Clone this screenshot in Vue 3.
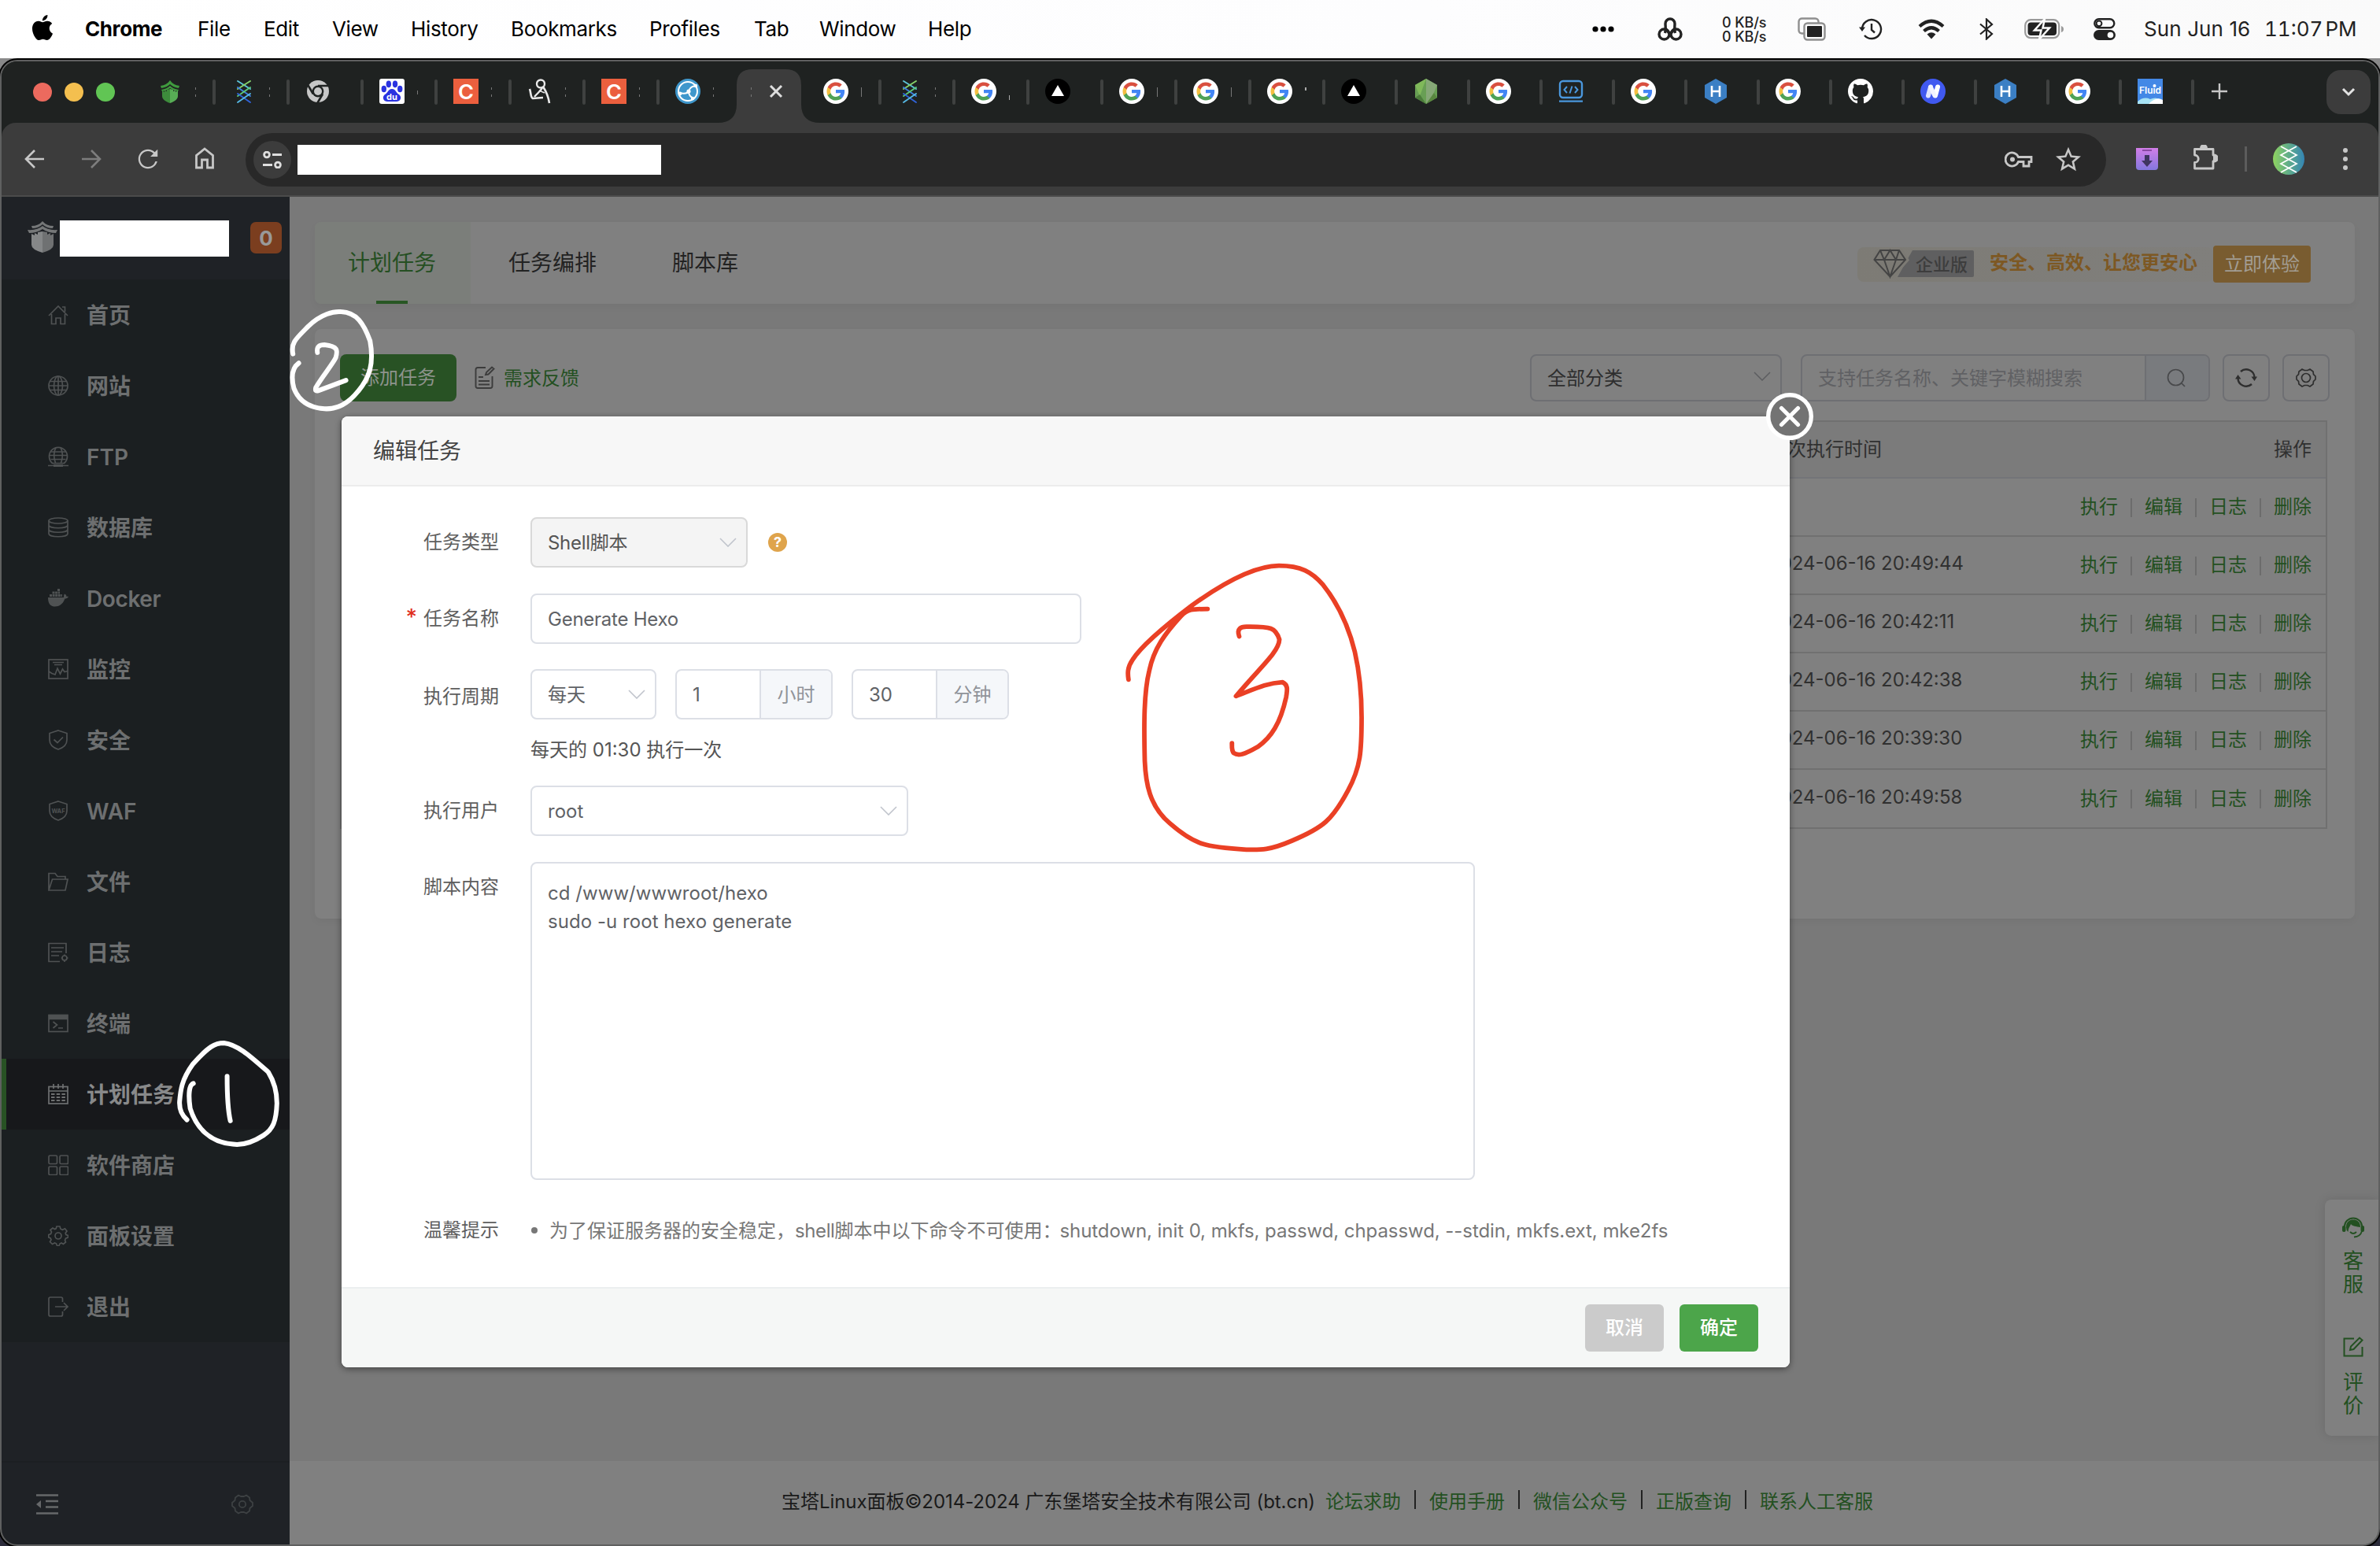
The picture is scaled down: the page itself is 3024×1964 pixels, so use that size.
<script setup>
const menuItems = [
  { label: 'Chrome', width: 143, bold: true },
  { label: 'File', width: 84 },
  { label: 'Edit', width: 87 },
  { label: 'View', width: 100 },
  { label: 'History', width: 127 },
  { label: 'Bookmarks', width: 176 },
  { label: 'Profiles', width: 133 },
  { label: 'Tab', width: 83 },
  { label: 'Window', width: 138 },
  { label: 'Help', width: 80 },
]

const fav = {
  bt: '<path d="M4 9Q12 8 16 2Q20 8 28 9L27 12Q20 11 16 7Q12 11 5 12Z" fill="#3f9a3e"/><path d="M5 14Q12 13 16 9Q20 13 27 14L26 16Q20 15 16 12Q12 15 6 16Z" fill="#3f9a3e"/><path d="M6 15l3 2v-2l3 1v-2l4-1v18C10 29 6 26 6 22Z" fill="#3d8c3c"/><path d="M26 15l-3 2v-2l-3 1v-2l-4-1v18C22 29 26 26 26 22Z" fill="#57ad55"/>',
  dna: '<g fill="none" stroke-width="2" stroke-linecap="round"><path stroke="#5cc4d8" d="M8 3L24 13"/><path stroke="#86d36a" d="M24 3L8 13"/><path stroke="#3d7fe0" d="M8 11L24 22"/><path stroke="#5cc97a" d="M24 11L8 22"/><path stroke="#2f63d8" d="M8 19L24 30"/><path stroke="#55b7e2" d="M24 19L8 30"/></g>',
  chrome: '<circle cx="16" cy="16" r="14" fill="#c7c7c7"/><g stroke="#1f2221" stroke-width="2.6" fill="none"><path d="M16 9H29M10 19.5L3.5 8.5M22 19.5L15.5 30.5"/></g><circle cx="16" cy="16" r="7.4" fill="#1f2221"/><circle cx="16" cy="16" r="5" fill="#c7c7c7"/>',
  baidu: '<rect width="32" height="32" rx="3" fill="#fff"/><g fill="#2a32e0"><ellipse cx="5.8" cy="13" rx="3.2" ry="4.2"/><ellipse cx="11.8" cy="6.8" rx="3.2" ry="4.4"/><ellipse cx="20" cy="6.8" rx="3.2" ry="4.4"/><ellipse cx="26.2" cy="13" rx="3.2" ry="4.2"/><path d="M16 13C21 13 21 18 25 20C29 23 27 29 22 29H10C5 29 3 23 7 20C11 18 11 13 16 13Z"/></g><text x="16" y="27" font-size="11" font-weight="700" text-anchor="middle" fill="#fff" font-family="Inter, sans-serif">du</text>',
  csdn: '<rect width="32" height="32" fill="#eb5f3e"/><text x="6" y="25.500" font-size="26" font-weight="600" fill="#fff" font-family="Inter, sans-serif" textLength="20" lengthAdjust="spacingAndGlyphs">C</text>',
  linux: '<g fill="none" stroke="#e9e9e9"><circle cx="17" cy="6.5" r="5" stroke-width="2.4"/><path d="M3 13C5 19 4 24 7 25L20 24" stroke-width="2.6"/><path d="M20 10C17 16 13 18 9 23" stroke-width="2.4"/><path d="M20 10C25 18 27 24 28 31" stroke-width="2.6"/><path d="M15 15L22 18" stroke-width="1.6"/></g>',
  orb: '<circle cx="16" cy="16" r="16" fill="#3f97cc"/><g fill="none" stroke="#fff" stroke-width="2"><circle cx="16" cy="16" r="12"/><path d="M5 18Q15 20 17 16Q19 9 27 9M17 16Q17 22 23 25"/></g><circle cx="17" cy="16" r="2.6" fill="#fff"/><circle cx="26" cy="9" r="2.2" fill="#fff"/><circle cx="6" cy="19" r="2.4" fill="#fff"/><circle cx="22" cy="25" r="2.2" fill="#fff"/>',
  google: '<circle cx="16" cy="16" r="16" fill="#fff"/><g transform="translate(3.4 3.4) scale(1.05)"><path fill="#4285F4" d="M22.56 12.25c0-.78-.07-1.53-.2-2.25H12v4.26h5.92c-.26 1.37-1.04 2.53-2.21 3.31v2.77h3.57c2.08-1.92 3.28-4.74 3.28-8.09z"/><path fill="#4fa256" d="M12 23c2.97 0 5.46-.98 7.28-2.66l-3.57-2.77c-.98.66-2.23 1.06-3.71 1.06-2.86 0-5.29-1.93-6.16-4.53H2.18v2.84C3.99 20.53 7.7 23 12 23z"/><path fill="#f4bf42" d="M5.84 14.09c-.22-.66-.35-1.36-.35-2.09s.13-1.43.35-2.09V7.07H2.18C1.43 8.55 1 10.22 1 12s.43 3.45 1.18 4.93l2.85-2.22.81-.62z"/><path fill="#d95040" d="M12 5.38c1.62 0 3.06.56 4.21 1.64l3.15-3.15C17.45 2.09 14.97 1 12 1 7.7 1 3.99 3.47 2.18 7.07l3.66 2.84c.87-2.6 3.3-4.53 6.16-4.53z"/></g>',
  vercel: '<circle cx="16" cy="16" r="16" fill="#000"/><path d="M16 8L24 22H8Z" fill="#fff"/>',
  node: '<path d="M16 0L30 8V24L16 32L2 24V8Z" fill="#689f54"/><path d="M16 0L30 8L22 27L16 32Z" fill="#86a877"/><path d="M2 8L16 0L8 22Z" fill="#80b95a"/><path d="M2 24L8 20L16 32Z" fill="#4c7c3b"/><path d="M30 24L26 18L16 32Z" fill="#58863f"/>',
  code: '<g fill="none" stroke="#4a97dd" stroke-width="2.4"><rect x="2" y="3" width="28" height="21" rx="4"/><path d="M1 28.6H31"/><path d="M11 10L7.500 14L11 18M21 10L24.500 14L21 18M17.500 9.500L14.500 18.500" stroke-width="2"/></g>',
  hexo: '<path d="M16 0L30 8V24L16 32L2 24V8Z" fill="#3b7fc4"/><path d="M11 9V23M21 9V23M11 16H21" stroke="#fff" stroke-width="2.6" fill="none"/>',
  github: '<path transform="scale(2)" fill="#fff" d="M8 0C3.58 0 0 3.58 0 8c0 3.54 2.29 6.53 5.47 7.59.4.07.55-.17.55-.38 0-.19-.01-.82-.01-1.49-2.01.37-2.53-.49-2.69-.94-.09-.23-.48-.94-.82-1.13-.28-.15-.68-.52-.01-.53.63-.01 1.08.58 1.23.82.72 1.21 1.87.87 2.33.66.07-.52.28-.87.51-1.07-1.78-.2-3.64-.89-3.64-3.95 0-.87.31-1.59.82-2.15-.08-.2-.36-1.02.08-2.12 0 0 .67-.21 2.2.82.64-.18 1.32-.27 2-.27s1.36.09 2 .27c1.53-1.04 2.2-.82 2.2-.82.44 1.1.16 1.92.08 2.12.51.56.82 1.27.82 2.15 0 3.07-1.87 3.75-3.65 3.95.29.25.54.73.54 1.48 0 1.07-.01 1.93-.01 2.2 0 .21.15.46.55.38A8.01 8.01 0 0016 8c0-4.42-3.58-8-8-8z"/>',
  nexmoe: '<circle cx="16" cy="16" r="16" fill="#4059f0"/><path d="M10 21.500L13 10.500" stroke="#dfe4ff" stroke-width="6" stroke-linecap="round"/><path d="M19 21.500L22 10.500" stroke="#fff" stroke-width="6" stroke-linecap="round"/><path d="M13 10.500L18 21" stroke="#f2f4ff" stroke-width="5.500" stroke-linecap="round"/>',
  fluid: '<rect width="32" height="32" fill="#4388e6"/><path d="M0 29Q8 22 16 26Q24 22 32 28V32H0Z" fill="#a7e3f5"/><path d="M14 32Q24 22 32 27V32Z" fill="#fff"/><text x="2" y="18.500" font-size="11.500" font-weight="600" fill="#fff" font-family="Inter, sans-serif" textLength="28" lengthAdjust="spacingAndGlyphs">Fluid</text><circle cx="21.500" cy="9" r="2" fill="#fff"/>',
}

const tab = (icon, frag = '', width = 94, sep = true) => ({ icon, frag, width, sep })
const leftTabs = [
  tab('bt', 'colon'), tab('dna', 'colon'), tab('chrome'), tab('baidu', 'dot'),
  tab('csdn', 'colon'), tab('linux', 'colon'), tab('csdn', 'colon'), tab('orb', 'colon', 94, false),
]
const rightTabs = [
  tab('google', 'bar'), tab('dna', 'colon'), tab('google', 'low'), tab('vercel'), tab('google', 'bar'),
  tab('google', 'bar'), tab('google', 'high'),
  ...['vercel', 'node', 'google', 'code', 'google', 'hexo', 'google', 'github', 'nexmoe', 'hexo', 'google', 'fluid']
    .map((n) => tab(n, '', 92)),
]

const side = [
  { label: '首页', icon: '<path d="M1 14L13 2L25 14M4.500 12V24.500H10V17H16V24.500H21.500V12M18 3H21.500V9"/>' },
  { label: '网站', icon: '<circle cx="13" cy="13" r="12"/><ellipse cx="13" cy="13" rx="5.500" ry="12"/><path d="M13 1V25M1 13H25M3 7.500H23M3 18.500H23"/>' },
  { label: 'FTP', icon: '<path d="M5.500 21.500A11.500 11.500 0 1 1 20.500 21.500Z"/><path d="M9.500 21C7 14 7 7 10 1.500M16.500 21C19 14 19 7 16 1.500M2 11.500H24M3.500 7H22.500M3.500 16.500H22.500M0 24.500H26"/><path d="M7 24.500H19" stroke-width="3"/>' },
  { label: '数据库', icon: '<ellipse cx="13" cy="4.500" rx="12" ry="3.500"/><path d="M1 4.500V21C1 26 25 26 25 21V4.500M1 10C1 15 25 15 25 10M1 15.500C1 20.500 25 20.500 25 15.500"/>' },
  { label: 'Docker', icon: '<path d="M0 12H20C20 10 20 9 21 7.500C23 8.500 23.500 9.500 23.500 11C24.500 10.500 25.500 10.500 26 11C25 13 23 13.500 21.500 13.500C19 20 15 23.500 9 23.500C3 23.500 0 20 0 12Z" fill="currentColor" stroke="none"/><path d="M2 9.500H18M5.500 6H15M12 2.500H15" stroke-width="3" stroke-dasharray="3 .6"/>' },
  { label: '监控', icon: '<rect x="1" y="1" width="24" height="24"/><path d="M6 4.500H20M8 7.500H18M1 16L5 18.500L9 20L12 12L15.500 19L18.500 13L21 16.500L25 15.500"/>' },
  { label: '安全', icon: '<path d="M13 1L24 4.500V13C24 19 19 23 13 25C7 23 2 19 2 13V4.500Z"/><path d="M7.500 12.500L12 16.500L19 9.500"/>' },
  { label: 'WAF', icon: '<path d="M13 1L24 4.500V13C24 19 19 23 13 25C7 23 2 19 2 13V4.500Z"/><text x="13" y="15.500" font-size="7.500" font-weight="700" text-anchor="middle" fill="currentColor" stroke="none" font-family="Inter, sans-serif">WAF</text>' },
  { label: '文件', icon: '<path d="M1 24V2.500H9L12 6.500H22V10M1 24L5.500 10H25L22 24Z"/>' },
  { label: '日志', icon: '<path d="M15 24.500H1V1.500H23V14M4 7H20M4 12H18M4 17H14"/><circle cx="21" cy="20" r="3" /><path d="M21 15.500V17M21 23V25M16.800 20H18M24 20H25.500"/>' },
  { label: '终端', icon: '<rect x="1" y="2.500" width="24" height="21"/><path d="M1 5.500H25" stroke-width="5.500"/><path d="M6.500 11L11.500 15L6.500 19M13 19H19"/>' },
  { label: '计划任务', active: true, icon: '<rect x="1" y="3.500" width="24" height="21.500"/><path d="M1 9H25M7 0V6M13 0V6M19 0V6"/><path d="M4 13H22M4 17H22M4 21H22" stroke-width="2" stroke-dasharray="4.500 2.200"/>' },
  { label: '软件商店', icon: '<rect x="1" y="1" width="10.500" height="10.500" rx="1.500"/><rect x="15" y="1" width="10.500" height="10.500" rx="1.500"/><rect x="1" y="15" width="10.500" height="10.500" rx="1.500"/><rect x="15" y="15" width="10.500" height="10.500" rx="1.500"/>' },
  { label: '面板设置', icon: '<circle cx="13" cy="13" r="4"/><path d="M11 1H15L16 4.200L18.500 5.200L21.500 3.800L24 7L22.200 9.500L22.800 11.500L25.500 12.500V15L22.500 16.200L21.500 18.500L22.500 21L19.500 23.500L17 22L15 23L14 25.500H11.500L10.500 22.800L8.500 22L5.500 23.500L2.500 20.500L4 18L3.200 16L.8 15V11.500L3.500 10.500L4.500 8L3 5.500L6 3L8.500 4.500L10.200 3.800Z"/>' },
  { label: '退出', icon: '<path d="M18.500 7V3Q18.500 1 16.500 1H3Q1 1 1 3V23Q1 25 3 25H16.500Q18.500 25 18.500 23V19M9 13H25M20 8L25 13L20 18"/>' },
]

const rows = ['', '2024-06-16 20:49:44', '2024-06-16 20:42:11', '2024-06-16 20:42:38', '2024-06-16 20:39:30', '2024-06-16 20:49:58']
const ops = ['执行', '编辑', '日志', '删除']
const links = ['论坛求助', '使用手册', '微信公众号', '正版查询', '联系人工客服']
</script>

<template>
  <div class="desktop">
    <header class="menubar">
      <svg class="apple" viewBox="0 0 24 24"><path d="M12.152 6.896c-.948 0-2.415-1.078-3.96-1.04-2.04.027-3.91 1.183-4.961 3.014-2.117 3.675-.546 9.103 1.519 12.09 1.013 1.454 2.208 3.09 3.792 3.039 1.52-.065 2.09-.987 3.935-.987 1.831 0 2.350.987 3.960.948 1.637-.026 2.676-1.480 3.676-2.948 1.156-1.688 1.636-3.325 1.662-3.415-.039-.013-3.182-1.221-3.220-4.857-.026-3.040 2.480-4.494 2.597-4.559-1.429-2.090-3.623-2.324-4.390-2.376-2-.156-3.675 1.090-4.610 1.090zM15.530 3.830c.843-1.012 1.400-2.427 1.245-3.830-1.207.052-2.662.805-3.532 1.818-.780.896-1.454 2.338-1.273 3.714 1.338.104 2.715-.688 3.559-1.701"/></svg>
      <span v-for="m in menuItems" :key="m.label" class="mi" :class="{ bold: m.bold }" :style="{ width: m.width + 'px' }">{{ m.label }}</span>
      <div class="status">
        <svg class="s-dots" width="28" height="8" viewBox="0 0 28 8"><circle cx="4" cy="4" r="3.600"/><circle cx="14" cy="4" r="3.600"/><circle cx="24" cy="4" r="3.600"/></svg>
        <svg class="s-knot" width="34" height="32" viewBox="0 0 34 32" fill="none" stroke="#222" stroke-width="3.400"><path d="M10.500 21C12 17 11 13 11 9A6 6 0 0 1 23 9C23 13 22 17 23.500 21"/><circle cx="9.500" cy="22.500" r="6.500"/><circle cx="24.500" cy="22.500" r="6.500"/><path d="M11 15L17 23L23 15"/></svg>
        <div class="net"><span>0 KB/s</span><span>0 KB/s</span></div>
        <svg class="s-stack" width="36" height="30" viewBox="0 0 36 30"><rect x="1.500" y="1.500" width="25" height="19" rx="4" fill="none" stroke="#8f8f8f" stroke-width="2.400"/><rect x="8.500" y="7.500" width="26" height="21" rx="4" fill="#fbfbfb" stroke="#8f8f8f" stroke-width="2.400"/><rect x="12" y="11" width="19" height="14" rx="1" fill="#222"/></svg>
        <svg class="s-clock" width="30" height="28" viewBox="0 0 30 28" fill="none" stroke="#222" stroke-width="2.400"><path d="M4 14A12 12 0 1 1 7 22"/><path d="M16 7V15L20 18.500"/><path d="M0 11.500H8L4 17Z" fill="#222" stroke="none"/></svg>
        <svg class="s-wifi" width="34" height="26" viewBox="0 0 34 26" fill="none" stroke="#222" stroke-width="4.200"><path d="M2 9.500Q17 -4 32 9.500"/><path d="M7.500 15.500Q17 7 26.500 15.500"/><path d="M11.500 19.500Q17 15 22.500 19.500L17 25.500Z" fill="#222" stroke="none"/></svg>
        <svg class="s-bt" width="18" height="28" viewBox="0 0 18 28" fill="none" stroke="#222" stroke-width="2.200"><path d="M1 7.500L16 20L9 26.500V1.500L16 8L1 20.500"/></svg>
        <svg class="s-bat" width="50" height="26" viewBox="0 0 50 26"><rect x="1.200" y="1.200" width="43" height="23" rx="7" fill="none" stroke="#9a9a9a" stroke-width="2.200"/><path d="M47 9Q50 10 50 13T47 17Z" fill="#9a9a9a"/><rect x="4.500" y="4.500" width="36.500" height="16.500" rx="4" fill="#222"/><path d="M26 0L13 14.500H21.500L19 26L32 11.500H23.500Z" fill="#222" stroke="#fbfbfb" stroke-width="2.500"/></svg>
        <svg class="s-cc" width="28" height="28" viewBox="0 0 28 28"><rect x="1.300" y="1.300" width="25" height="11" rx="5.500" fill="none" stroke="#222" stroke-width="2.400"/><circle cx="7" cy="6.800" r="3.400" fill="none" stroke="#222" stroke-width="2"/><rect y="15" width="28" height="13" rx="6.500" fill="#222"/><circle cx="21.500" cy="21.500" r="3.800" fill="#fff"/></svg>
        <span class="date">Sun Jun 16</span><span class="time">11:07 PM</span>
      </div>
    </header>

    <div class="window">
      <div class="tabstrip">
        <div class="lights"><i class="r"></i><i class="y"></i><i class="g"></i></div>
        <div v-for="(t, i) in leftTabs" :key="'l' + i" class="tab" :style="{ width: t.width + 'px' }">
          <svg class="fav" viewBox="0 0 32 32" v-html="fav[t.icon]"></svg>
          <i class="frag" :class="t.frag"></i>
          <i v-if="t.sep" class="sep"></i>
        </div>
        <div class="tab active">
          <svg class="shape" width="130" height="68" viewBox="0 0 130 68"><path d="M0 68Q24 68 24 44V20Q24 0 44 0H86Q106 0 106 20V44Q106 68 130 68Z" fill="#3c3c3c"/></svg>
          <i class="frag colon"></i>
          <svg class="x" width="18" height="18" viewBox="0 0 18 18"><path d="M2 2L16 16M16 2L2 16" stroke="#dedede" stroke-width="3"/></svg>
        </div>
        <div v-for="(t, i) in rightTabs" :key="'r' + i" class="tab" :style="{ width: t.width + 'px' }">
          <svg class="fav" viewBox="0 0 32 32" v-html="fav[t.icon]"></svg>
          <i class="frag" :class="t.frag"></i>
          <i class="sep"></i>
        </div>
        <svg class="plus" width="22" height="22" viewBox="0 0 22 22"><path d="M11 1V21M1 11H21" stroke="#c7c7c7" stroke-width="2.400"/></svg>
        <div class="drop"><svg width="18" height="12" viewBox="0 0 18 12"><path d="M2 2L9 9L16 2" fill="none" stroke="#e3e3e3" stroke-width="3"/></svg></div>
      </div>

      <div class="toolbar">
        <svg class="ic back" viewBox="0 0 26 26" fill="none" stroke="#c7c7c7" stroke-width="2.600"><path d="M25 13H2M13 2L2 13L13 24"/></svg>
        <svg class="ic fwd" viewBox="0 0 26 26" fill="none" stroke="#7d7d7d" stroke-width="2.600"><path d="M1 13H24M13 2L24 13L13 24"/></svg>
        <svg class="ic reload" viewBox="3.500 3.500 17 17" fill="#c7c7c7"><path d="M17.650 6.350A7.958 7.958 0 0 0 12 4c-4.420 0-7.990 3.580-7.990 8s3.570 8 7.990 8c3.730 0 6.840-2.550 7.730-6h-1.600A6.450 6.450 0 0 1 12 18.500c-3.590 0-6.500-2.910-6.500-6.500s2.910-6.500 6.500-6.500c1.800 0 3.400.74 4.580 1.920L14 10h6V4l-2.350 2.350z"/></svg>
        <svg class="ic home" viewBox="0 0 26 28" fill="none" stroke="#c7c7c7" stroke-width="2.800"><path d="M2.500 26V10.500L13 2L23.500 10.500V26H16.500V16H9.500V26Z"/></svg>
        <div class="omni">
          <div class="chip"><svg width="24" height="22" viewBox="0 0 24 22" fill="none" stroke="#dedede" stroke-width="2.800"><circle cx="5" cy="4.500" r="3.400"/><path d="M12 4.500H24M0 17.500H12"/><circle cx="19" cy="17.500" r="3.400"/></svg></div>
          <div class="url"></div>
          <svg class="key" width="36" height="22" viewBox="0 0 36 22" fill="none" stroke="#c7c7c7" stroke-width="2.800"><path d="M17.500 7.500A8.500 8.500 0 1 0 17.500 13.500H24V19H31V13.500H34V7.500Z"/><circle cx="10" cy="10.500" r="3" fill="#c7c7c7" stroke="none"/></svg>
          <svg class="star" width="32" height="32" viewBox="2 1.500 20 20" fill="#c7c7c7"><path d="M22 9.240l-7.190-.620L12 2 9.190 8.630 2 9.240l5.460 4.730L5.820 21 12 17.270 18.180 21l-1.630-7.030L22 9.240zM12 15.400l-3.760 2.270 1-4.280-3.320-2.880 4.380-.380L12 6.100l1.710 4.040 4.380.380-3.320 2.880 1 4.280L12 15.400z"/></svg>
        </div>
        <svg class="ext" width="28" height="28" viewBox="0 0 28 28"><defs><linearGradient id="pg" x1="0" y1="0" x2="0" y2="1"><stop offset="0" stop-color="#d27ee8"/><stop offset="1" stop-color="#8377dd"/></linearGradient></defs><path d="M0 0H28V24Q28 28 24 28H4Q0 28 0 24Z" fill="url(#pg)"/><path d="M8 3H20" stroke="#8a4aa5" stroke-width="2"/><path d="M11 9H17V16H21L14 24L7 16H11Z" fill="#3f3560"/></svg>
        <svg class="puz" width="32" height="32" viewBox="0 0 32 32" fill="none" stroke="#c7c7c7" stroke-width="2.800"><path d="M2.500 5.500H26V13H27.500A3.500 3.500 0 0 1 27.500 21H26V30H2.500V22.500A4.500 4.500 0 0 0 2.500 13Z" stroke-linejoin="round"/><path d="M10.500 5V4A3.500 3.500 0 0 1 17.500 4V5Z" fill="#c7c7c7"/><path d="M26 13H28A4 4 0 0 1 28 21H26Z" fill="#c7c7c7" stroke="none"/></svg>
        <i class="tsep"></i>
        <svg class="avatar" width="40" height="40" viewBox="0 0 40 40"><defs><linearGradient id="ag"><stop offset="0" stop-color="#8fd45f"/><stop offset="1" stop-color="#3385b5"/></linearGradient></defs><circle cx="20" cy="20" r="20" fill="url(#ag)"/><path d="M10 4L30 15L10 26L30 37M30 4L10 15L30 26L10 37" fill="none" stroke="#fff" stroke-width="1.800"/></svg>
        <svg class="kebab" width="6" height="30" viewBox="0 0 6 30" fill="#c7c7c7"><circle cx="3" cy="4" r="3"/><circle cx="3" cy="15" r="3"/><circle cx="3" cy="26" r="3"/></svg>
      </div>

      <div class="page">
        <aside class="sidebar">
          <div class="brand">
            <svg width="38" height="42" viewBox="0 0 38 42"><g fill="#757778"><path d="M5 7Q14 7 19 1Q24 7 33 7L32 10Q24 10 19 5Q14 10 6 10Z"/><path d="M0 12Q12 13 19 7Q26 13 38 12L36 16Q26 16 19 11Q12 16 2 16Z"/><path d="M5 17L9 19V16L13 18V15L19 14V41Q5 37 5 31Z" fill="#858788"/><path d="M33 17L29 19V16L25 18V15L19 14V41Q33 37 33 31Z" fill="#6f7172"/></g></svg>
            <div class="redact"></div>
            <span class="badge">0</span>
          </div>
          <nav class="nav">
            <div v-for="s in side" :key="s.label" class="item" :class="{ on: s.active }">
              <svg viewBox="0 0 26 26" fill="none" stroke="currentColor" stroke-width="1.700" v-html="s.icon"></svg>
              <span>{{ s.label }}</span>
            </div>
          </nav>
          <div class="sidefoot">
            <svg width="28" height="26" viewBox="0 0 28 26" stroke="#66686a" stroke-width="2.400"><path d="M0 1.500H28M12 9H28M12 16.500H28M0 24.500H28"/><path d="M0 13L6 8V18Z" fill="#66686a" stroke="none"/></svg>
            <svg width="28" height="26" viewBox="0 0 28 26" fill="none" stroke="#3d4143" stroke-width="1.800"><path d="M9 1.500L12 3H16L19 1.500L23 4.500L23.500 8L27 11V15L23.500 18L23 21.500L19 24.500L16 23H12L9 24.500L5 21.500L4.500 18L1 15V11L4.500 8L5 4.500Z" stroke-linejoin="round"/><circle cx="14" cy="13" r="4.200"/></svg>
          </div>
        </aside>

        <main class="main">
          <section class="card tabs">
            <div class="ptab on">计划任务</div>
            <div class="ptab">任务编排</div>
            <div class="ptab">脚本库</div>
            <div class="promo">
              <div class="ent">
                <svg width="128" height="38" viewBox="0 0 128 38"><path d="M50 2H126Q128 2 128 4V34Q128 36 126 36H31Z" fill="#5f5f60"/><path d="M9 1.500H33L41 14L21.500 36L1 14Z" fill="#7c7a74" stroke="#7c7a74" stroke-width="8" /><path d="M9 2H33L41 14L21.500 35.500L1.500 14Z M1.500 14H41 M9 2L14 14L21.500 35.500L29 14L33 2 M14 14L21.500 2L29 14" fill="none" stroke="#444" stroke-width="2"/></svg>
                <span>企业版</span>
              </div>
              <span class="slogan">安全、高效、让您更安心</span>
            </div>
            <span class="try">立即体验</span>
          </section>

          <section class="card content">
            <div class="bar">
              <span class="add">添加任务</span>
              <svg class="fb" width="26" height="30" viewBox="0 0 26 30" fill="none" stroke="#3c3c3c" stroke-width="1.900"><path d="M14 2H4Q1.500 2 1.500 4.500V25.500Q1.500 28 4 28H20Q22.500 28 22.500 25.500V13M5 14H11M5 19H19M5 23.500H19M14 11L15 8L22 1.500L24.500 3.500L17.500 10.500Z"/></svg>
              <span class="fbt">需求反馈</span>
              <div class="sel"><span>全部分类</span><svg width="22" height="12" viewBox="0 0 22 12"><path d="M1 1L11 11L21 1" fill="none" stroke="#5c5d60" stroke-width="1.500"/></svg></div>
              <div class="search"><span>支持任务名称、关键字模糊搜索</span><div><svg width="24" height="24" viewBox="0 0 24 24" fill="none" stroke="#48494b" stroke-width="1.700"><circle cx="11.500" cy="11.500" r="10"/><path d="M18.500 18.500L23 23"/></svg></div></div>
              <div class="sq"><svg width="28" height="26" viewBox="0 0 28 26" fill="none" stroke="#2e2e2e" stroke-width="2.400"><path d="M7 5A10.500 10.500 0 0 1 24.500 13M21 21A10.500 10.500 0 0 1 3.500 13"/><path d="M20.500 11.500H28L24.500 17ZM0 14.500H7.500L3.500 9Z" fill="#2e2e2e" stroke="none"/></svg></div>
              <div class="sq"><svg width="26" height="26" viewBox="0 0 26 26" fill="none" stroke="#2e2e2e" stroke-width="1.700"><path d="M8 2L11 3.500H15L18 2L22 5L22.500 8.500L25 11V15L22.500 17.500L22 21L18 24L15 22.500H11L8 24L4 21L3.500 17.500L1 15V11L3.500 8.500L4 5Z"/><circle cx="13" cy="13" r="5.500"/></svg></div>
            </div>
            <div class="table">
              <div class="tr th"><span class="when">上次执行时间</span><span class="thop">操作</span></div>
              <div v-for="(r, i) in rows" :key="i" class="tr">
                <span class="when date-cell">{{ r }}</span>
                <div class="ops"><template v-for="(o, j) in ops" :key="o"><i v-if="j"></i><span>{{ o }}</span></template></div>
              </div>
            </div>
          </section>

          <footer class="foot">
            <span class="copy">宝塔Linux面板©2014-2024 广东堡塔安全技术有限公司 (bt.cn)</span>
            <template v-for="(l, i) in links" :key="l"><i v-if="i"></i><a>{{ l }}</a></template>
          </footer>
        </main>

        <div class="widget">
          <svg width="28" height="28" viewBox="0 0 28 28"><path d="M3 12A11 10.500 0 0 1 25 12" fill="none" stroke="#235021" stroke-width="2"/><path d="M5 13C5 6 9 3.500 14 3.500S23 6 23 13C18 12 13 12 11 9C10 12 8 13 7.500 19Q5 17 5 13Z" fill="#235021"/><rect x="0" y="11" width="4.500" height="8" rx="2" fill="#235021"/><rect x="23.500" y="11" width="4.500" height="8" rx="2" fill="#235021"/><path d="M25 18Q23 25 15 25.500M10 19Q14 23 18 19" fill="none" stroke="#235021" stroke-width="1.800"/></svg>
          <p>客<br>服</p>
          <svg class="w2" width="26" height="26" viewBox="0 0 26 26" fill="none" stroke="#235021" stroke-width="2"><path d="M14 2.500H1.500V24.500H24.500V13M9 17L10 12.500L21 1.500L24.500 4.500L13.500 16Z"/></svg>
          <p>评<br>价</p>
        </div>

        <div class="modal">
          <div class="mhead">编辑任务</div>
          <div class="mbody">
            <div class="row"><label>任务类型</label>
              <div class="ctl select dis" style="width: 276px"><span>Shell脚本</span><svg width="22" height="12" viewBox="0 0 22 12"><path d="M1 1L11 11L21 1"/></svg></div>
              <span class="q">?</span></div>
            <div class="row r2"><label><b>*</b>任务名称</label><div class="ctl" style="width: 700px"><span class="lat">Generate Hexo</span></div></div>
            <div class="row r3"><label class="down">执行周期</label>
              <div class="ctl select" style="width: 160px"><span>每天</span><svg width="22" height="12" viewBox="0 0 22 12"><path d="M1 1L11 11L21 1"/></svg></div>
              <div class="ctl unit"><span>1</span><em>小时</em></div>
              <div class="ctl unit"><span>30</span><em>分钟</em></div></div>
            <div class="hint">每天的 01:30 执行一次</div>
            <div class="row r4"><label>执行用户</label><div class="ctl select" style="width: 480px"><span class="root">root</span><svg width="22" height="12" viewBox="0 0 22 12"><path d="M1 1L11 11L21 1"/></svg></div></div>
            <div class="row r5"><label>脚本内容</label><div class="ctl area"><span class="l1">cd /www/wwwroot/hexo</span><span class="l2">sudo -u root hexo generate</span></div></div>
            <div class="row tips"><label>温馨提示</label><div class="tip"><i></i><span>为了保证服务器的安全稳定，<s>shell</s>脚本中以下命令不可使用：<u>shutdown, init 0, mkfs, passwd, chpasswd, --stdin, mkfs.ext, mke2fs</u></span></div></div>
          </div>
          <div class="mfoot"><span class="btn gray">取消</span><span class="btn green">确定</span></div>
          <svg class="close" width="60" height="60" viewBox="0 0 60 60"><circle cx="30" cy="30" r="27.300" fill="#737373" stroke="#fff" stroke-width="5.400"/><path d="M19.500 19.500L40.500 40.500M40.500 19.500L19.500 40.500" stroke="#fff" stroke-width="5.200" stroke-linecap="round"/></svg>
        </div>
      </div>
    </div>

    <svg class="ink" width="3024" height="1964" viewBox="0 0 3024 1964" fill="none" stroke-linecap="round" stroke-linejoin="round">
      <g transform="translate(0 230) scale(.40816 .44643)" stroke="#fff" stroke-width="6">
        <path vector-effect="non-scaling-stroke" d="M912 492C905 460 920 450 960 413C1000 378 1040 370 1062 372C1110 374 1132 405 1152 455C1165 520 1150 560 1115 598C1080 638 1045 650 1010 648C960 645 930 625 915 590C905 555 912 530 930 518"/>
        <path vector-effect="non-scaling-stroke" d="M988 488C985 470 995 466 1010 466C1052 470 1052 482 1045 503C1035 522 1000 560 983 588C980 598 985 598 992 596L1077 567"/>
      </g>
      <g transform="translate(0 930) scale(.40816 .65944)" stroke="#fff" stroke-width="6">
        <path vector-effect="non-scaling-stroke" d="M582 747C565 738 558 725 559 712C562 690 565 670 600 640C650 605 670 599 697 599C740 602 780 625 835 655C860 680 862 700 862 715C860 750 850 765 820 777C780 793 750 796 725 794C650 790 610 760 592 725C586 700 588 680 602 677"/>
        <path vector-effect="non-scaling-stroke" d="M707 663C707 700 710 730 717 749"/>
      </g>
      <g transform="translate(1400 500) scale(.57398 .39541)" stroke="#ea4025" stroke-width="5.800">
        <path vector-effect="non-scaling-stroke" d="M59 919C57 900 56 880 68 855C90 805 150 735 200 680C250 628 330 553 392 553C440 553 465 572 490 615C520 670 545 740 560 830C571 900 575 960 575 1040C575 1150 573 1200 545 1275C510 1370 490 1395 420 1437C370 1468 350 1466 320 1465C230 1458 205 1450 150 1380C105 1325 97 1250 95 1180C93 1060 93 960 105 890C115 820 140 770 175 715C190 692 200 692 234 692"/>
        <path vector-effect="non-scaling-stroke" d="M304 780C298 755 308 749 320 749C375 748 385 752 393 790C392 830 350 880 297 972C340 948 365 930 400 927C412 935 411 950 408 975C395 1060 375 1105 345 1135C315 1160 302 1165 292 1155C287 1148 288 1130 288 1123"/>
      </g>
    </svg>
  </div>
</template>

<style>
body { margin: 0; background: #000; }
</style>

<style scoped>
* { box-sizing: border-box; }
i, em { font-style: normal; }
.desktop { position: relative; width: 3024px; height: 1964px; overflow: hidden; background: linear-gradient(#8d8d8d, #2b2b3a); font-family: Inter, "Noto Sans CJK SC", sans-serif; font-size: 24px; white-space: nowrap; }
.desktop svg { flex: none; display: block; }

.menubar { height: 74px; background: linear-gradient(90deg, #fff, #fdfdfe 60%, #fafafa); display: flex; padding-left: 38px; color: #000; font-size: 26px; letter-spacing: -.35px; line-height: 74px; }
.apple { width: 32px; height: 32px; margin: 19px 38px 0 0; }
.mi { flex: none; display: block; }
.mi.bold { font-weight: 700; letter-spacing: -.4px; width: 142px; }
.status { flex: 1; display: flex; align-items: center; justify-content: flex-end; color: #222; padding-right: 34px; }
.s-dots { margin-right: 54px; }
.s-knot { margin-right: 49px; }
.net { width: 58px; display: flex; flex-direction: column; font-size: 18px; line-height: 18px; letter-spacing: -.1px; font-weight: 500; margin-right: 38px; padding-top: 2px; }
.s-stack { margin-right: 42px; }
.s-clock { margin-right: 45px; }
.s-wifi { margin-right: 44px; }
.s-bt { margin-right: 39px; }
.s-bat { margin-right: 38px; }
.s-cc { margin-right: 36px; }
.date { width: 153px; letter-spacing: .1px; }
.time { width: 113px; letter-spacing: 0; word-spacing: -4px; font-variant-numeric: tabular-nums; }

.window { margin-top: 2px; height: 1888px; border: 2px solid #5f6060; border-radius: 22px; overflow: hidden; background: #1f2221; box-shadow: 0 0 0 2px #000; display: flex; flex-direction: column; }
.tabstrip { height: 78px; display: flex; align-items: center; background: #1f2221; flex: none; }
.lights { width: 176px; padding-left: 39.500px; display: flex; gap: 16px; flex: none; }
.lights i { width: 24px; height: 24px; border-radius: 50%; }
.lights .r { background: #ec6a5e; }
.lights .y { background: #f4bf4f; }
.lights .g { background: #61c554; }
.tab { height: 78px; display: flex; align-items: center; padding-left: 22px; position: relative; flex: none; }
.fav { width: 32px; height: 32px; margin-top: -2px; }
.frag { width: 2px; height: 24px; margin-left: 16px; flex: none; }
.frag.colon { background: linear-gradient(#777 0 3px, transparent 3px 9px, #777 9px 12px, transparent 12px); height: 12px; width: 1px; }
.frag.dot { background: #777; width: 1px; height: 5px; }
.frag.bar { background: #777; width: 1px; height: 12px; }
.frag.low { background: #aaa; width: 1px; height: 6px; margin-top: 14px; }
.frag.high { background: #aaa; width: 2px; height: 4px; margin-top: -8px; }
.sep { width: 4px; height: 32px; border-radius: 2px; background: #3f4140; margin: 0 -2px 0 auto; }
.tab.active { width: 94px; }
.shape { position: absolute; left: -18px; top: 10px; }
.tab.active .frag { position: relative; margin-left: 2px; }
.tab.active .x { position: relative; margin-left: 22px; margin-top: -2px; }
.plus { margin-left: 23px; margin-top: -2px; }
.drop { margin-left: auto; margin-right: 10px; width: 56px; height: 56px; border-radius: 18px; background: #3c3c3c; display: flex; align-items: center; justify-content: center; margin-top: -1px; }

.toolbar { height: 94px; background: #3c3c3c; border-bottom: 2px solid #4b4b4b; border-radius: 18px 18px 0 0; display: flex; align-items: center; flex: none; padding-left: 29px; }
.ic { width: 26px; height: 26px; margin-right: 46px; }
.ic.home { height: 28px; margin-top: -2px; margin-right: 39px; }
.omni { width: 2364px; height: 68px; border-radius: 34px; background: #282828; display: flex; align-items: center; padding-left: 10px; flex: none; margin-top: 1px; }
.chip { width: 48px; height: 48px; border-radius: 50%; background: #3c3c3c; display: flex; align-items: center; justify-content: center; }
.url { width: 462px; height: 38px; background: #fff; margin-left: 8px; }
.key { margin-left: auto; margin-right: 29px; }
.star { margin-right: 32px; margin-top: -2px; }
.ext { margin-left: 38px; }
.puz { margin-left: 44px; margin-top: -4px; }
.tsep { width: 3px; height: 32px; background: #5c5c5c; margin-left: 34px; }
.avatar { margin-left: 33px; }
.kebab { margin-left: 49px; }

.page { flex: 1; display: flex; position: relative; background: #797979; }
.sidebar { width: 366px; background: #1f2226; display: flex; flex-direction: column; flex: none; }
.brand { height: 105px; display: flex; align-items: flex-start; padding: 30px 0 0 33px; }
.redact { width: 215px; height: 46px; background: #fff; margin-left: 3px; }
.badge { margin: 2px 0 0 27px; width: 40px; height: 40px; border-radius: 7px; background: #7b3e1f; color: #999; font-size: 26px; font-weight: 700; text-align: center; line-height: 41px; }
.nav { background: #1b1f21; }
.item { height: 90px; display: flex; align-items: center; padding-left: 59px; color: #4f5253; }
.item svg { width: 26px; height: 26px; margin-right: 23px; }
.item span { color: #6d6f70; font-size: 28px; font-weight: 600; line-height: 40px; padding-top: 1px; }
.item:nth-child(5) span { letter-spacing: -.4px; }
.item.on { background: #17181b; color: #6e7071; padding-left: 53px; border-left: 6px solid #285224; }
.item.on span { color: #88898a; }
.sidefoot { margin-top: auto; height: 106px; border-top: 2px solid #1c1f22; display: flex; justify-content: space-between; align-items: center; padding: 2px 46px 0 44px; }

.main { flex: 1; display: flex; flex-direction: column; min-width: 0; }
.card { background: #808080; border-radius: 8px; margin: 32px 30px 0 32px; box-shadow: 0 4px 10px rgba(0, 0, 0, .04); flex: none; }
.tabs { height: 104px; display: flex; align-items: center; font-size: 28px; color: #222; overflow: hidden; }
.ptab { padding: 0 48px; line-height: 105px; height: 104px; position: relative; }
.ptab.on { width: 198px; padding: 0 0 0 42px; color: #254f22; background: #7b7e7a; }
.ptab.on::after { content: ""; position: absolute; left: 78px; bottom: 0; width: 40px; height: 4px; background: #285724; }
.promo { margin-left: auto; width: 452px; height: 44px; border-radius: 8px; background: linear-gradient(90deg, #7d7b75, #807f7c); display: flex; align-items: center; padding-left: 20px; margin-top: 4px; }
.ent { position: relative; width: 128px; height: 38px; }
.ent svg { margin-top: -1px; }
.ent span { position: absolute; left: 54px; top: 2px; font-size: 22px; line-height: 34px; font-weight: 500; color: #3d3d3d; }
.slogan { margin-left: 20px; color: #7d5823; font-weight: 700; font-size: 24px; line-height: 40px; margin-top: -4px; }
.try { width: 124px; height: 47px; border-radius: 4px; background: #795c30; color: #a29d93; font-size: 24px; line-height: 47px; text-align: center; margin: 3px 56px 0 0; }

.content { height: 749px; display: flex; flex-direction: column; padding: 32px 32px 0; }
.bar { display: flex; align-items: center; height: 60px; }
.add { width: 148px; height: 60px; border-radius: 8px; background: #285224; color: #8d938c; text-align: center; line-height: 60px; }
.fb { margin-left: 23px; }
.fbt { color: #235021; margin-left: 11px; margin-top: -3px; }
.sel { margin-left: auto; width: 320px; height: 60px; border: 2px solid #6e6f73; border-radius: 8px; display: flex; align-items: center; justify-content: space-between; padding: 0 12px 0 20px; color: #2e2e2e; }
.sel span { margin-top: -3px; }
.sel svg { margin-top: -4px; }
.search { margin-left: 24px; width: 520px; height: 60px; border: 2px solid #6e6f73; border-radius: 8px; display: flex; align-items: center; color: #606164; overflow: hidden; }
.search span { width: 435px; padding-left: 20px; margin-top: -3px; }
.search div { flex: 1; height: 56px; border-left: 2px solid #6e6f73; background: #797b7e; display: flex; align-items: center; justify-content: center; padding-right: 3px; }
.sq { margin-left: 16px; width: 60px; height: 60px; border: 2px solid #6e6f73; border-radius: 8px; display: flex; align-items: center; justify-content: center; }
.table { margin: 24px 3px 0 0; height: 519px; border: 2px solid #707070; display: flex; flex-direction: column; }
.tr { height: 74px; border-bottom: 2px solid #707070; display: flex; align-items: center; justify-content: space-between; padding: 0 18px 5px 1813px; color: #303030; flex: none; }
.tr:last-child { border-bottom: 0; height: 73px; }
.th { height: 72px; background: #7b7b7b; border-color: #737478; }
.date-cell { letter-spacing: 0; font-size: 24px; }
.ops { display: flex; align-items: center; color: #235021; }
.ops i { width: 2px; height: 24px; background: #6c6c6c; margin: 6px 16px 0; }

.foot { margin-top: auto; height: 106px; background: #808080; display: flex; align-items: center; padding: 0 0 8px 625px; color: #1a1a1a; }
.copy { width: 691px; letter-spacing: -.05px; }
.foot a { color: #235021; }
.foot i { width: 2px; height: 24px; background: #222; margin: 0 17px; }

.widget { position: absolute; left: 2952px; top: 1274px; width: 68px; height: 300px; border-radius: 8px 0 0 8px; background: #808080; box-shadow: 0 0 14px rgba(0, 0, 0, .12); display: flex; flex-direction: column; align-items: center; padding-top: 22px; padding-left: 4px; color: #235021; }
.widget p { margin: 13px 0 0; font-size: 26px; line-height: 30px; text-align: center; }
.widget .w2 { margin-top: 51px; }
.widget .w2 + p { margin-top: 17px; }

.modal { position: absolute; left: 432px; top: 279px; width: 1840px; height: 1208px; background: #fff; border-radius: 8px; box-shadow: 0 2px 8px rgba(0, 0, 0, .45); display: flex; flex-direction: column; color: #666; }
.mhead { height: 89px; background: #f7f7f7; border-bottom: 2px solid #ececec; border-radius: 8px 8px 0 0; padding-left: 40px; font-size: 28px; line-height: 89px; color: #444; }
.mbody { flex: 1; padding-top: 39px; }
.row { display: flex; align-items: flex-start; height: 64px; }
.row label { width: 200px; margin-right: 40px; text-align: right; line-height: 64px; flex: none; color: #5e5e5e; }
.row label.down { padding-top: 3px; }
.row b { color: #e0301e; font-weight: 500; margin-right: 8px; font-size: 28px; line-height: 1; }
.ctl { height: 64px; border: 2px solid #dcdfe6; border-radius: 8px; padding-left: 20px; line-height: 61px; flex: none; color: #606266; background: #fff; }
.select { display: flex; justify-content: space-between; align-items: center; padding-right: 12px; }
.select path { fill: none; stroke: #c0c4cc; stroke-width: 1.600; }
.dis { background: #f4f4f4; border-color: #d9d9d9; color: #555; }
.dis span { letter-spacing: -.3px; padding-top: 1px; }
.lat { letter-spacing: -.25px; }
.q { width: 24px; height: 24px; border-radius: 50%; background: #dfa44c; color: #fff; font-size: 18px; font-weight: 700; text-align: center; line-height: 24px; margin: 20px 0 0 26px; }
.r2 { margin-top: 33px; }
.r3 { margin-top: 32px; }
.unit { width: 200px; margin-left: 24px; display: flex; overflow: hidden; }
.unit span { flex: 1; }
.unit em { width: 91px; border-left: 2px solid #dcdfe6; background: #f5f7fa; color: #909399; text-align: center; }
.hint { margin: 23px 0 29px 240px; line-height: 32px; height: 32px; color: #555; }
.root { padding-top: 1px; }
.r5 { margin-top: 33px; height: 404px; }
.area { width: 1200px; height: 404px; padding-top: 20px; line-height: 36px; display: flex; flex-direction: column; letter-spacing: .05px; }
.tips { margin-top: 32px; }
.tip { display: flex; align-items: center; height: 60px; color: #777; }
.tip i { width: 8px; height: 8px; border-radius: 50%; background: #777; margin: 4px 15px 0 1px; }
.tip s { text-decoration: none; letter-spacing: -.4px; }
.tip u { text-decoration: none; letter-spacing: -.07px; margin-left: -2px; }
.mfoot { height: 102px; background: #f5f7f6; border-top: 2px solid #eceff0; border-radius: 0 0 8px 8px; display: flex; justify-content: flex-end; align-items: center; gap: 20px; padding-right: 40px; }
.btn { width: 100px; height: 60px; border-radius: 6px; color: #fff; font-weight: 500; text-align: center; line-height: 60px; }
.gray { background: #cbcbcb; }
.green { background: #4ca54a; }
.close { position: absolute; right: -30px; top: -30px; }

.ink { position: absolute; left: 0; top: 0; }
</style>
